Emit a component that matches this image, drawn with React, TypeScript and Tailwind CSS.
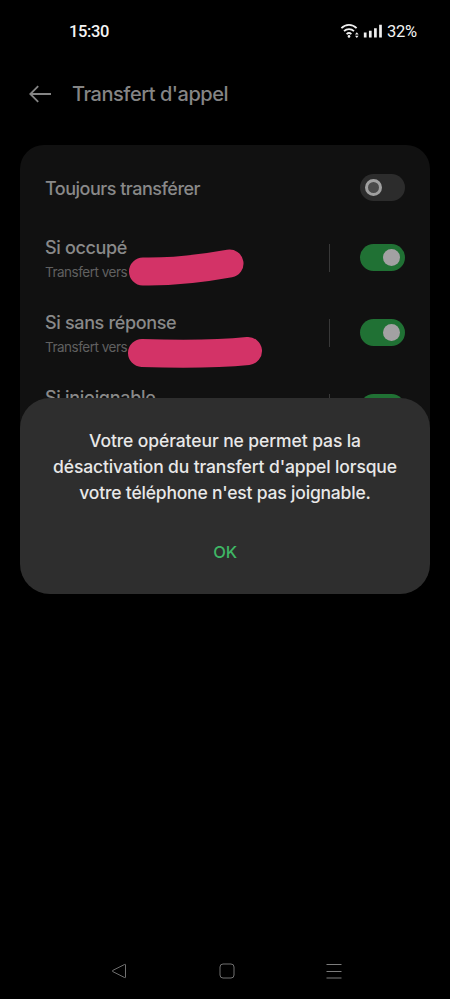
const ui = "font-['Inter','Liberation_Sans',sans-serif]";

function Switch({ on }: { on: boolean }) {
  return on ? (
    <span className="flex h-[27px] w-[45px] shrink-0 items-center justify-end rounded-full bg-[#207134] pr-[5px]">
      <span className="size-[17px] rounded-full bg-[#a3a1a3]" />
    </span>
  ) : (
    <span className="flex h-[27px] w-[45px] shrink-0 items-center rounded-full bg-[#2c2c2c] pl-[5px]">
      <span className="size-[17px] rounded-full border-[3.5px] border-[#a0a0a0] bg-[#4b4b4b]" />
    </span>
  );
}

function ForwardRow({ title, titleClass, mark }: { title: string; titleClass: string; mark?: React.ReactNode }) {
  return (
    <div className="flex h-[75px] items-center">
      <div className="relative flex-1 pt-[2px]">
        <div className={`text-[18px] leading-[24px] font-[450] whitespace-nowrap text-[#898989] ${titleClass}`}>{title}</div>
        <div className="mt-[2px] text-[13.5px] leading-[20px] tracking-[-0.5px] whitespace-nowrap text-[#606060]">
          Transfert vers
        </div>
        {mark}
      </div>
      <span className="mr-[30px] h-[28px] w-px bg-[#383838]" />
      <Switch on />
    </div>
  );
}

export default function App() {
  return (
    <div className={`relative flex h-[999px] w-[450px] flex-col overflow-hidden bg-black ${ui}`}>
      <div className="flex h-[62px] items-center justify-between pr-[33px] pl-[69px] font-['Roboto',sans-serif] font-medium text-[#f4f4f4]">
        <span className="pt-[2px] text-[16.5px] tracking-[-0.4px]">15:30</span>
        <div className="flex items-center">
          <svg width="44" height="16" viewBox="0 0 44 16" className="mr-[3px]" fill="none" stroke="#efefef">
            <path d="M1.4 5.1C5.7.7 12.3.7 16.6 5.1M4 8.2c2.9-2.8 7.1-2.8 10 0M6.6 11.1c1.5-1.3 3.3-1.3 4.8 0" strokeWidth="1.8" />
            <circle cx="9" cy="13.4" r="1.3" fill="#efefef" stroke="none" />
            <path d="M15 11.6 16.8 9.3 18.6 11.6ZM15 12.7H18.6L16.8 15Z" fill="#efefef" stroke="none" />
            <path d="M25.2 9.6V14.4M30.3 7.8V14.4M35.4 5.2V14.4M40.5 1.8V14.4" strokeWidth="2.7" />
          </svg>
          <span className="pt-[2px] text-[16.5px] font-[450] tracking-[-0.2px]">32%</span>
        </div>
      </div>

      <header className="flex h-[64px] items-center pl-[29px] text-[#858585]">
        <svg width="23" height="18" viewBox="0 0 23 18" fill="none" stroke="currentColor" strokeWidth="1.8">
          <path d="M22 9H1.5M9.2 1.2 1.3 9l7.9 7.8" />
        </svg>
        <h1 className="ml-[20px] text-[20px] leading-[28px] font-[450] tracking-[-0.48px] whitespace-nowrap">
          Transfert d'appel
        </h1>
      </header>

      <main className="mx-[20px] mt-[19px] h-[330px] rounded-[24px] bg-[#111] px-[25px]">
        <div className="flex h-[75px] items-center justify-between pt-[10px]">
          <span className="pt-[2px] text-[18px] leading-[24px] font-[450] tracking-[-0.5px] whitespace-nowrap text-[#898989]">
            Toujours transférer
          </span>
          <Switch on={false} />
        </div>
        <ForwardRow
          title="Si occupé"
          titleClass="tracking-[-0.35px]"
          mark={
            <svg className="absolute top-[14px] left-[84px]" width="115" height="38" viewBox="0 0 115 38" fill="none">
              <path d="M14 23.5C42 24 76 20 100.500 15.5" stroke="#d33367" strokeWidth="28" strokeLinecap="round" />
            </svg>
          }
        />
        <ForwardRow
          title="Si sans réponse"
          titleClass="tracking-[-0.35px]"
          mark={
            <svg className="absolute top-[26px] left-[83px]" width="135" height="36" viewBox="0 0 135 36" fill="none">
              <path d="M14 18C45 19 80 20 120 16" stroke="#d33367" strokeWidth="28" strokeLinecap="round" />
            </svg>
          }
        />
        <ForwardRow title="Si injoignable" titleClass="tracking-[-0.3px]" />
      </main>

      <section
        role="dialog"
        className="absolute top-[398px] left-[20px] flex h-[196px] w-[410px] flex-col items-center rounded-[30px] bg-[#2e2e2e] pt-[29.5px]"
      >
        <p className="text-center text-[17.5px] leading-[26.3px] font-medium whitespace-nowrap text-[#e8e8e8]">
          <span className="block tracking-[-0.1px]">Votre opérateur ne permet pas la</span>
          <span className="block tracking-[-0.14px]">désactivation du transfert d'appel lorsque</span>
          <span className="block tracking-[-0.19px]">votre téléphone n'est pas joignable.</span>
        </p>
        <button className="mt-[33.5px] text-[16.5px] leading-[24px] font-[450] tracking-[-0.3px] text-[#3fb665]">OK</button>
      </section>

      <nav className="mt-auto flex h-[56px] items-center justify-between pr-[108px] pl-[111px]">
        <svg width="16" height="16" viewBox="0 0 16 16" fill="none" stroke="#707070" strokeLinejoin="round">
          <path d="M14.500 1.700V14.300Q14.500 15 13.700 14.600L1.600 8.500Q1 8 1.600 7.500L13.700 1.400Q14.500 1 14.500 1.700Z" />
        </svg>
        <svg width="16" height="16" viewBox="0 0 16 16" fill="none" stroke="#707070">
          <rect x="1" y="1" width="14" height="14" rx="3" />
        </svg>
        <svg width="16" height="16" viewBox="0 0 16 16" fill="none" stroke="#7c7c7c">
          <path d="M.5 1.500H15.500M.5 8.500H15.500M.5 15H15.500" />
        </svg>
      </nav>
    </div>
  );
}
